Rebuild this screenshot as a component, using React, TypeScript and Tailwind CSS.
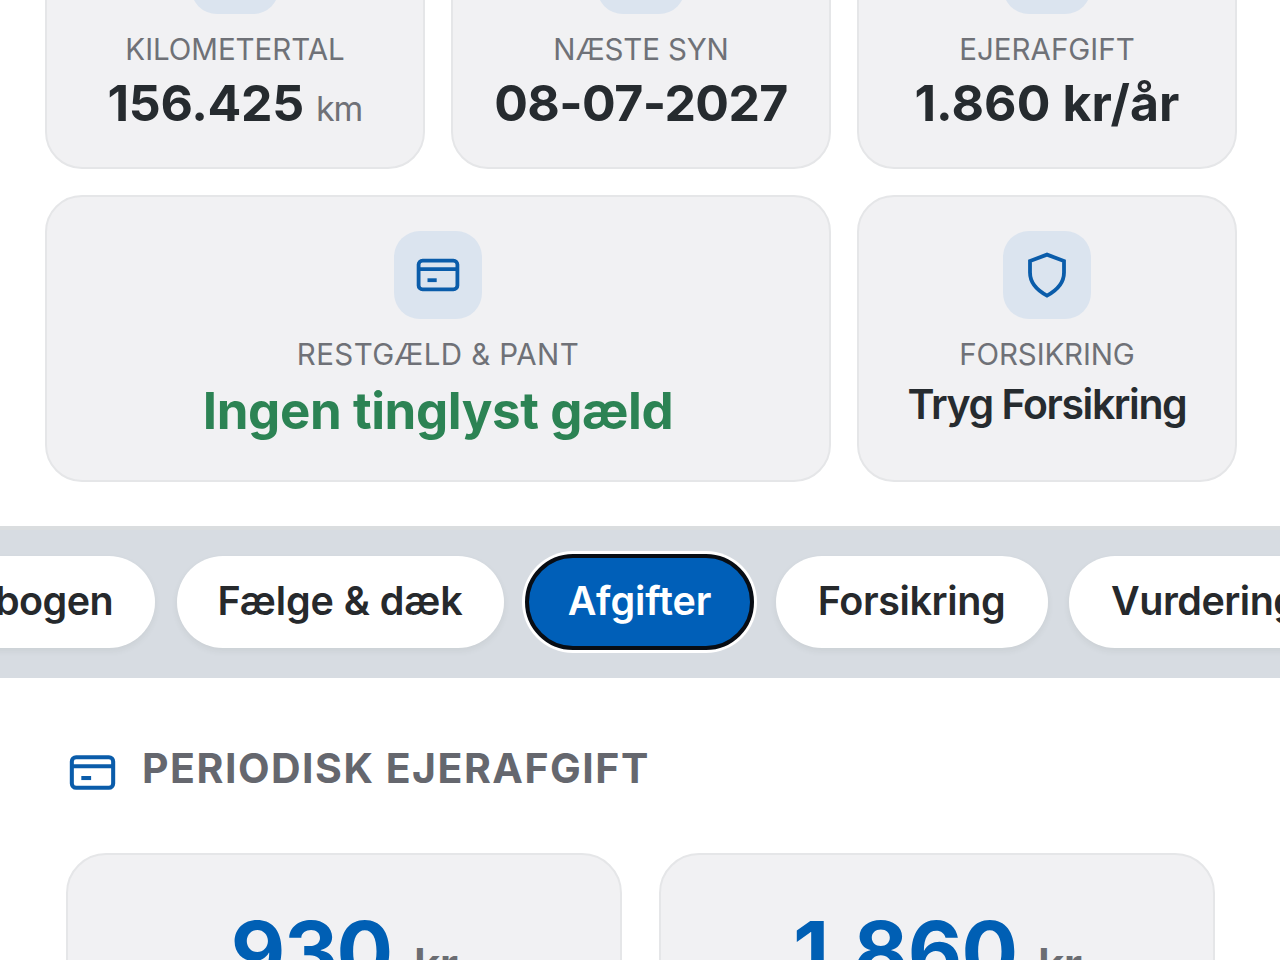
import React from 'react';

const CardIcon: React.FC<{ className?: string }> = ({ className }) => (
  <svg className={className} viewBox="0 0 46 36" fill="none" stroke="currentColor" strokeWidth="3.8">
    <rect x="3.6" y="3.6" width="38.8" height="28.8" rx="4" />
    <path d="M3.6 12.2h38.8" />
    <path d="M12.5 23.2h9.2" />
  </svg>
);

const ShieldIcon: React.FC<{ className?: string }> = ({ className }) => (
  <svg className={className} viewBox="0 0 44 50" fill="none" stroke="currentColor" strokeWidth="3.8">
    <path d="M22 4.6 39 11V22.5C39 32.5 31.5 40.5 22 45.6C12.5 40.5 5 32.5 5 22.5V11Z" />
  </svg>
);

interface StatCardProps {
  label: string;
  labelClass: string;
  className?: string;
  icon?: React.ReactNode;
  children: React.ReactNode;
}

const StatCard: React.FC<StatCardProps> = ({ label, labelClass, className = '', icon, children }) => (
  <div className={`flex flex-col items-center rounded-[37px] border-2 border-[#e5e6e8] bg-[#f1f1f3] pt-[34px] whitespace-nowrap ${className}`}>
    <div className="flex size-[88px] shrink-0 items-center justify-center rounded-[26px] bg-[#dbe4ef] text-[#0a5caa]">
      {icon}
    </div>
    <div className={`mt-[15px] text-[29.5px] leading-[40px] text-[#6f7177] ${labelClass}`}>{label}</div>
    {children}
  </div>
);

const tabs = [
  { label: 'Servicebogen', className: 'w-[340px] justify-end pr-[42px] tracking-[-0.6px]' },
  { label: 'Fælge & dæk', className: 'w-[327px] justify-center tracking-[-0.1px]' },
  { label: 'Afgifter', active: true, className: 'w-[229px] justify-center tracking-[-0.1px]' },
  { label: 'Forsikring', className: 'w-[272px] justify-center tracking-[-0.4px]' },
  { label: 'Vurdering', className: 'w-[280px] pl-[42px] tracking-[-0.5px]' },
];

const App: React.FC = () => {
  return (
    <div className="h-[960px] w-[1280px] overflow-hidden bg-white font-['Inter',sans-serif]">
      {/* Key figures */}
      <section className="-mt-[110px] grid grid-cols-3 grid-rows-[279px_287px] gap-[26px] pr-[43px] pl-[45px]">
        <StatCard label="KILOMETERTAL" labelClass="tracking-[-0.05px]">
          <div className="mt-[3px] flex items-baseline leading-[62px]">
            <span className="text-[50px] font-bold tracking-[-0.3px] text-[#262b2f]">156.425</span>
            <span className="ml-[12px] text-[34px] tracking-[-1px] text-[#6f7177]">km</span>
          </div>
        </StatCard>
        <StatCard label="NÆSTE SYN" labelClass="tracking-[-0.15px]">
          <div className="mt-[3px] text-[50px] leading-[62px] font-bold tracking-[-0.6px] text-[#262b2f]">08-07-2027</div>
        </StatCard>
        <StatCard label="EJERAFGIFT" labelClass="tracking-[0px]">
          <div className="mt-[3px] text-[50px] leading-[62px] font-bold tracking-[0.1px] text-[#262b2f]">1.860 kr/år</div>
        </StatCard>
        <StatCard
          label="RESTGÆLD & PANT"
          labelClass="tracking-[0.4px]"
          className="col-span-2"
          icon={<CardIcon className="h-[36px] w-[46px]" />}
        >
          <div className="mt-[3px] text-[51px] leading-[68px] font-bold tracking-[-0.4px] text-[#2c8354]">Ingen tinglyst gæld</div>
        </StatCard>
        <StatCard
          label="FORSIKRING"
          labelClass="tracking-[-0.15px]"
          icon={<ShieldIcon className="h-[50px] w-[44px]" />}
        >
          <div className="mt-px text-[41px] leading-[58px] font-semibold tracking-[-1.4px] text-[#262b2f]">Tryg Forsikring</div>
        </StatCard>
      </section>

      {/* Section tabs */}
      <nav className="mt-[44px] flex h-[152px] items-center overflow-hidden border-t-4 border-[#dadddf] bg-[#d7dce2] pb-[5px] text-[39.5px] font-semibold whitespace-nowrap">
        {/* scrolled so the active tab is centred */}
        <div className="-ml-[185px] flex items-center gap-[21.5px]">
          {tabs.map((tab) => (
            <a
              key={tab.label}
              className={`flex shrink-0 items-center rounded-full ${tab.className} ${
                tab.active
                  ? 'h-[96px] border-4 border-[#080d14] bg-[#005fb8] text-white ring-3 ring-white'
                  : 'h-[92px] bg-white text-[#26292c] shadow-[0_3px_6px_rgba(60,80,70,0.08)]'
              }`}
            >
              {tab.label}
            </a>
          ))}
        </div>
      </nav>

      {/* Periodic ownership tax */}
      <section className="px-[66px] pt-[65px]">
        <h2 className="flex h-[52px] items-center text-[41px] font-bold whitespace-nowrap text-[#65676e]">
          <CardIcon className="mt-[7px] ml-[2px] h-[39px] w-[49px] text-[#0a5caa]" />
          <span className="ml-[25px] tracking-[1.5px]">PERIODISK EJERAFGIFT</span>
        </h2>
        <div className="-mr-px mt-[58px] grid grid-cols-2 gap-[37px]">
          <div className="flex h-[260px] items-baseline justify-center rounded-[40px] border-2 border-[#e5e6e8] bg-[#f1f1f3] pt-[46px] whitespace-nowrap">
            <span className="text-[84px] leading-[102px] font-bold tracking-[-1.5px] text-[#005fb4]">930</span>
            <span className="ml-[22px] text-[47px] font-semibold tracking-[-1px] text-[#6b6d72]">kr</span>
          </div>
          <div className="flex h-[260px] items-baseline justify-center rounded-[40px] border-2 border-[#e5e6e8] bg-[#f1f1f3] pt-[46px] whitespace-nowrap">
            <span className="text-[84px] leading-[102px] font-bold tracking-[-0.6px] text-[#005fb4]">1.860</span>
            <span className="ml-[20px] text-[47px] font-semibold tracking-[-1px] text-[#6b6d72]">kr</span>
          </div>
        </div>
      </section>
    </div>
  );
};

export default App;
